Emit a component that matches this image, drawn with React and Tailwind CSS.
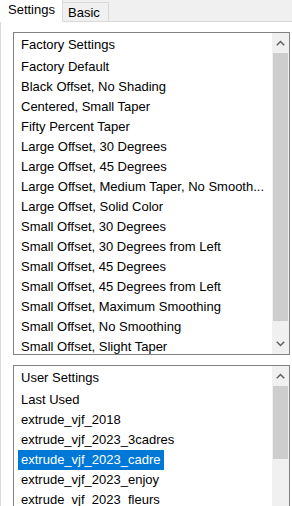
import React from "react";

const factoryItems = [
  "Factory Default",
  "Black Offset, No Shading",
  "Centered, Small Taper",
  "Fifty Percent Taper",
  "Large Offset, 30 Degrees",
  "Large Offset, 45 Degrees",
  "Large Offset, Medium Taper, No Smooth...",
  "Large Offset, Solid Color",
  "Small Offset, 30 Degrees",
  "Small Offset, 30 Degrees from Left",
  "Small Offset, 45 Degrees",
  "Small Offset, 45 Degrees from Left",
  "Small Offset, Maximum Smoothing",
  "Small Offset, No Smoothing",
  "Small Offset, Slight Taper",
];

const userItems = [
  "Last Used",
  "extrude_vjf_2018",
  "extrude_vjf_2023_3cadres",
  "extrude_vjf_2023_cadre",
  "extrude_vjf_2023_enjoy",
  "extrude_vjf_2023_fleurs",
  "extrude_vjf_2023_noel",
];

export default function App() {
  return (
    <div
      className="w-[292px] h-[506px] overflow-hidden bg-[#f0f0f0] text-[13px] text-black flex flex-col"
      style={{ fontFamily: '"Liberation Sans", Arial, sans-serif' }}
    >
      {/* tabs */}
      <div className="h-[21px] flex items-end shrink-0">
        <div className="h-[22px] w-[63px] bg-white border-r border-[#d9d9d9] pl-[8px] pt-[2px] leading-[16px] relative z-10 -mb-px">
          Settings
        </div>
        <div className="h-[19px] w-[46px] border-t border-r border-[#d9d9d9] pl-[5px] pt-[2px] leading-[16px]">
          Basic
        </div>
      </div>

      {/* panel */}
      <div className="flex-1 bg-white border-t border-l border-[#d9d9d9] pl-[12px] pt-[10px] flex flex-col gap-[10px] min-h-0">
        <ListBox
          header="Factory Settings"
          items={factoryItems}
          height="h-[323px]"
          thumbClass="h-[268px]"
        />
        <ListBox
          header="User Settings"
          items={userItems}
          height="h-[200px]"
          thumbClass="h-[73px]"
          selected="extrude_vjf_2023_cadre"
          noBottom
        />
      </div>
    </div>
  );
}

function ListBox({ header, items, height, thumbClass, selected, noBottom }) {
  return (
    <div
      className={`w-[277px] shrink-0 border border-[#828282] ${height} ${
        noBottom ? "border-b-0" : ""
      } flex overflow-hidden`}
    >
      <div className="flex-1 overflow-hidden">
        <div className="h-[24px] flex items-center pl-[7px] whitespace-nowrap">{header}</div>
        {items.map((it) => (
          <div key={it} className="h-[20px] flex items-center pl-[4px] whitespace-nowrap">
            <span
              className={`px-[3px] leading-[20px] ${
                it === selected ? "bg-[#0078d7] text-white" : ""
              }`}
            >
              {it}
            </span>
          </div>
        ))}
      </div>
      <ScrollBar thumbClass={thumbClass} />
    </div>
  );
}

function ScrollBar({ thumbClass }) {
  return (
    <div className="w-[17px] shrink-0 bg-[#f0f0f0] flex flex-col">
      <div className="h-[20px] flex items-center justify-center shrink-0">
        <Chevron up />
      </div>
      <div className="flex-1 flex flex-col px-[1px] min-h-0">
        <div className={`${thumbClass} bg-[#cdcdcd] shrink-0`} />
        <div className="flex-1" />
      </div>
      <div className="h-[20px] flex items-center justify-center shrink-0">
        <Chevron />
      </div>
    </div>
  );
}

function Chevron({ up }) {
  return (
    <svg width="9" height="6" viewBox="0 0 9 6" fill="none">
      <path
        d={up ? "M0.8 5.2 L4.5 1.5 L8.2 5.2" : "M0.8 0.8 L4.5 4.5 L8.2 0.8"}
        stroke="#606060"
        strokeWidth="1.5"
      />
    </svg>
  );
}
